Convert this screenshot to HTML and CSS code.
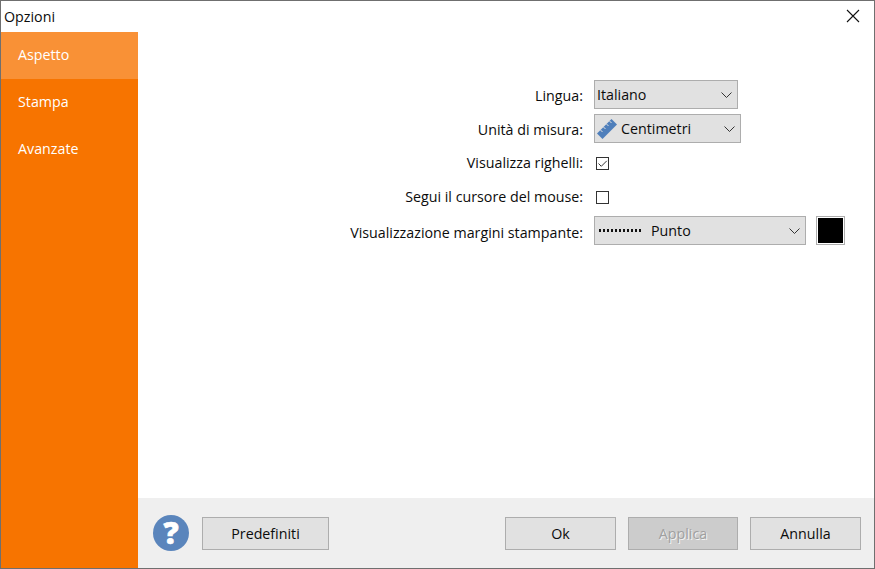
FILE: index.html
```html
<!DOCTYPE html>
<html lang="it">
<head>
<meta charset="utf-8">
<title>Opzioni</title>
<link rel="stylesheet" href="styles.css">
</head>
<body>
<div class="window">
  <header class="titlebar">
    <span class="title">Opzioni</span>
    <svg class="close" width="14" height="14" viewBox="0 0 14 14"><path d="M1 1l12 12M13 1L1 13" stroke="#111" stroke-width="1.1" fill="none"/></svg>
  </header>
  <div class="body">
    <nav class="sidebar">
      <div class="nav-item active">Aspetto</div>
      <div class="nav-item">Stampa</div>
      <div class="nav-item">Avanzate</div>
    </nav>
    <div class="content">
      <main class="main">
        <div class="form">
          <label class="label nudge-1">Lingua:</label>
          <div class="field"><div class="combo w-lang"><span class="combo-text">Italiano</span><svg class="chev" width="11" height="6" viewBox="0 0 11 6"><path d="M.5.5l5 5 5-5" stroke="#333" fill="none"/></svg></div></div>
          <label class="label nudge-1">Unità di misura:</label>
          <div class="field"><div class="combo w-unit">
            <svg class="ruler" width="20" height="20" viewBox="0 0 20 20"><path d="M0 14.500L14.500 0 20 5.500 5.500 20z" fill="#4f7fbb"/><path d="M3.500 11l2 2M6.500 8l2 2M9.500 5l2 2M12.500 2l2 2" stroke="#e1e1e1" stroke-width="1" fill="none"/></svg>
            <span class="combo-text">Centimetri</span><svg class="chev" width="11" height="6" viewBox="0 0 11 6"><path d="M.5.5l5 5 5-5" stroke="#333" fill="none"/></svg></div></div>
          <label class="label">Visualizza righelli:</label>
          <div class="field"><span class="check"><svg width="11" height="11" viewBox="0 0 11 11"><path d="M1.500 5.500l2.800 2.800 5.500-5.500" stroke="#333" fill="none"/></svg></span></div>
          <label class="label">Segui il cursore del mouse:</label>
          <div class="field"><span class="check"></span></div>
          <label class="label nudge-2">Visualizzazione margini stampante:</label>
          <div class="field color-row">
            <div class="combo w-margin"><span class="dots"></span><span class="combo-text">Punto</span><svg class="chev" width="11" height="6" viewBox="0 0 11 6"><path d="M.5.5l5 5 5-5" stroke="#333" fill="none"/></svg></div>
            <div class="swatch"></div>
          </div>
        </div>
      </main>
      <footer class="footer">
        <div class="help">?</div>
        <button class="btn btn-default">Predefiniti</button>
        <span class="spacer"></span>
        <button class="btn btn-ok">Ok</button>
        <button class="btn btn-apply" disabled>Applica</button>
        <button class="btn btn-cancel">Annulla</button>
      </footer>
    </div>
  </div>
</div>
</body>
</html>
```
FILE: styles.css
```css
* { box-sizing: border-box; }
html, body { margin: 0; padding: 0; background: #fff; }
body { font-family: "Open Sans", "Noto Sans", sans-serif; font-size: 14.25px; color: #0c0c0c; }
.window { width: 875px; height: 569px; border: 1px solid #6f6f6f; display: flex; flex-direction: column; overflow: hidden; background: #fff; }
.titlebar { height: 31px; flex: none; display: flex; align-items: center; justify-content: space-between; padding: 0 14px 0 3px; }
.close { display: block; margin-top: -2px; }
.body { flex: 1; display: flex; min-height: 0; }
.sidebar { width: 137px; flex: none; background: #f77400; color: #fff; }
.nav-item { height: 47px; padding: 0 0 3px 17px; display: flex; align-items: center; }
.nav-item.active { background: #f99136; }
.content { flex: 1; display: flex; flex-direction: column; min-width: 0; }
.main { flex: 1; padding: 48px 0 0 0; }
.form { display: grid; grid-template-columns: 445px 1fr; grid-auto-rows: 29px; column-gap: 11px; row-gap: 5px; }
.label { display: flex; align-items: center; justify-content: flex-end; }
.nudge-1 { padding-top: 2px; }
.nudge-2 { padding-top: 4px; }
.field { display: flex; align-items: center; }
.combo { height: 29px; background: #e1e1e1; border: 1px solid #adadad; display: flex; align-items: center; padding: 0 5px 0 2px; }
.combo-text { flex: 1; }
.w-lang { width: 144px; }
.w-unit { width: 147px; }
.w-margin { width: 212px; }
.chev { display: block; flex: none; }
.ruler { flex: none; margin-right: 4px; }
.dots { width: 44px; height: 3px; flex: none; margin: 0 8px 0 2px; background: repeating-linear-gradient(90deg, #111 0 2px, transparent 2px 4px); }
.check { width: 13px; height: 13px; margin: 2px 0 0 2px; border: 1px solid #333; background: #fff; display: block; }
.check svg { display: block; }
.color-row { gap: 10px; }
.swatch { width: 29px; height: 29px; background: #000; border: 1px solid #adadad; box-shadow: inset 0 0 0 1px #fff; }
.footer { height: 70px; flex: none; background: #efefef; display: flex; align-items: center; padding: 1px 13px 0 15px; }
.help { width: 36px; height: 36px; flex: none; margin: -1px 13px 0 0; border-radius: 50%; background: #5a85bc; color: #fff; font-weight: 800; font-size: 30px; line-height: 36px; text-align: center; -webkit-text-stroke: 0.6px #fff; }
.spacer { flex: 1; }
.btn { height: 33px; font: inherit; color: #0c0c0c; background: #e1e1e1; border: 1px solid #adadad; padding: 0; }
.btn-default { width: 127px; }
.btn-ok { width: 111px; }
.btn-apply { width: 110px; margin-left: 12px; background: #cccccc; color: #a0a0a0; text-shadow: 1px 1px 0 #f4f4f4; }
.btn-cancel { width: 111px; margin-left: 12px; }
```
